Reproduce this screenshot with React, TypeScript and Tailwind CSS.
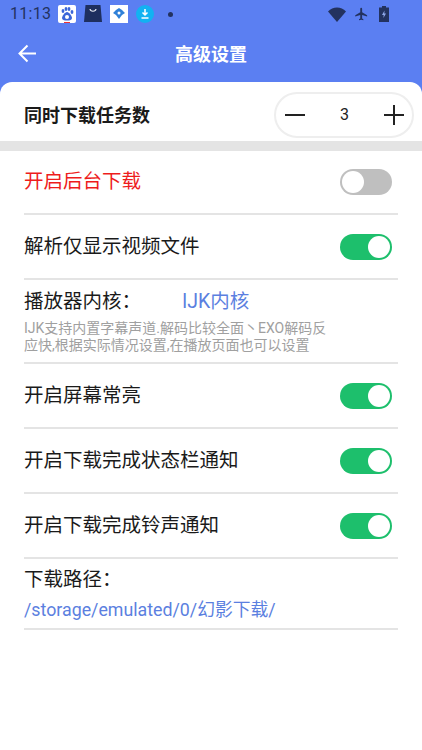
const font = { fontFamily: 'Roboto, "Noto Sans CJK SC", sans-serif' };

function Toggle({ on = true }: { on?: boolean }) {
  return (
    <div className={`w-[52px] h-[26px] rounded-full flex items-center px-[2px] ${on ? "bg-[#1dbf6c] justify-end" : "bg-[#bfbfbf] justify-start"}`}>
      <div className="w-[22px] h-[22px] rounded-full bg-white" />
    </div>
  );
}

function Row({ label, on = true, red = false, h = "h-[64px]" }: { label: string; on?: boolean; red?: boolean; h?: string }) {
  return (
    <div className={`${h} mx-[24px] border-b-2 border-[#e4e4e4] flex items-center justify-between pr-[6px]`}>
      <span className={`text-[19.5px] leading-[26px] ${red ? "text-[#ee1c1c]" : "text-[#1a1a1a]"}`}>{label}</span>
      <Toggle on={on} />
    </div>
  );
}

function StatusBar() {
  return (
    <div className="h-[28px] flex items-center pl-[10px] pr-[33px] text-[#23325f]">
      <span className="text-[16px] leading-[28px] tracking-[0.3px] w-[48px]">11:13</span>
      <div className="flex items-center gap-[8px]">
        <svg width="18" height="18" viewBox="0 0 18 18">
          <rect width="18" height="18" rx="2" fill="#fff" />
          <ellipse cx="5" cy="6" rx="1.4" ry="2" fill="#3b66d8" />
          <ellipse cx="8" cy="4" rx="1.4" ry="2" fill="#3b66d8" />
          <ellipse cx="11" cy="4" rx="1.4" ry="2" fill="#3b66d8" />
          <ellipse cx="14" cy="7" rx="1.4" ry="2" fill="#3b66d8" />
          <path d="M9 7c-2 0-5 4-5 6s2 2.5 5 2.5 5-.5 5-2.5-3-6-5-6z" fill="#3b66d8" />
          <circle cx="9" cy="12" r="2" fill="#fff" />
          <rect x="6" y="17" width="6" height="1" fill="#e33" />
        </svg>
        <svg width="18" height="18" viewBox="0 0 18 18">
          <path d="M1.5 0h15L18 17H0z" fill="#1e2f5f" />
          <path d="M6 4c.5 3 5.500 3 6 0" stroke="#e8ecf5" strokeWidth="1.200" fill="none" />
        </svg>
        <svg width="18" height="18" viewBox="0 0 18 18">
          <rect width="18" height="18" fill="#fff" />
          <path d="M9 3l3 2 3 3-3 2-3 4-3-4-3-2 3-3z" fill="#2f80d8" />
          <circle cx="9" cy="8" r="1.500" fill="#fff" />
        </svg>
        <svg width="18" height="18" viewBox="0 0 18 18">
          <circle cx="9" cy="9" r="9" fill="#12b2f2" />
          <path d="M9 4v6M6.500 7.500L9 10l2.500-2.500M5.500 13h7" stroke="#fff" strokeWidth="1.500" fill="none" />
        </svg>
      </div>
      <div className="ml-[14px] w-[5px] h-[5px] rounded-full bg-[#23325f]" />
      <div className="ml-auto flex items-center gap-[8px]">
        <svg width="18" height="15" viewBox="0 0 18 15">
          <path d="M0 4.500C2.500 1.800 5.600 0.500 9 0.500s6.500 1.300 9 4L9 15z" fill="#23325f" />
        </svg>
        <svg width="15" height="16" viewBox="0 0 24 24" fill="#23325f">
          <path d="M21 16v-2l-8-5V3.500a1.500 1.500 0 0 0-3 0V9l-8 5v2l8-2.500V19l-2 1.500V22l3.500-1 3.500 1v-1.500L13 19v-5.500z" />
        </svg>
        <svg width="10" height="16" viewBox="0 0 10 16" className="ml-[2px]">
          <path d="M3 0h4v1.500h3V16H0V1.500h3z" fill="#23325f" />
          <path d="M5.500 4.500L3 9h1.700l-.3 3L7 7.500H5.300z" fill="#8fa8ea" />
        </svg>
      </div>
    </div>
  );
}

export default function App() {
  return (
    <div className="w-[422px] h-[750px] bg-[#5b7ff2] flex flex-col overflow-hidden" style={font}>
      <StatusBar />
      <div className="h-[54px] relative flex items-center justify-center">
        <svg className="absolute left-[18px] top-[16px]" width="19" height="19" viewBox="0 0 19 19" fill="none" stroke="#fff" strokeWidth="2">
          <path d="M18 9.500H2M9.500 1.500l-8 8 8 8" />
        </svg>
        <span className="text-white text-[18px] font-bold leading-[24px]">高级设置</span>
      </div>
      <div className="flex-1 bg-white rounded-t-[12px] flex flex-col">
        <div className="h-[59px] flex items-center justify-between pl-[24px] pr-[8px] pt-[7px] shrink-0">
          <span className="text-[18px] font-bold text-[#1a1a1a]">同时下载任务数</span>
          <div className="w-[140px] h-[46px] border-2 border-[#eeeeee] rounded-full flex items-center justify-between pl-[9px] pr-[8px]">
            <div className="w-[20px] h-[2px] bg-[#222]" />
            <span className="text-[16px] text-[#222]">3</span>
            <div className="relative w-[20px] h-[20px]">
              <div className="absolute left-0 top-[9px] w-[20px] h-[2px] bg-[#222]" />
              <div className="absolute left-[9px] top-0 w-[2px] h-[20px] bg-[#222]" />
            </div>
          </div>
        </div>
        <div className="h-[10px] bg-[#e4e4e4] shrink-0" />
        <Row label="开启后台下载" on={false} red />
        <Row label="解析仅显示视频文件" h="h-[65px]" />
        <div className="mx-[24px] h-[84px] border-b-2 border-[#e4e4e4] pt-[8px]">
          <div className="flex items-center h-[28px]">
            <span className="text-[19.5px] text-[#1a1a1a] w-[158px]">播放器内核：</span>
            <span className="text-[19.5px] text-[#5b7fe0]">IJK内核</span>
          </div>
          <p className="mt-[4px] text-[14px] leading-[17px] text-[#a0a0a0] w-[310px]">IJK支持内置字幕声道.解码比较全面丶EXO解码反应快,根据实际情况设置,在播放页面也可以设置</p>
        </div>
        <Row label="开启屏幕常亮" h="h-[65px]" />
        <Row label="开启下载完成状态栏通知" h="h-[65px]" />
        <Row label="开启下载完成铃声通知" h="h-[65px]" />
        <div className="mx-[24px] h-[71px] border-b-2 border-[#e4e4e4] pt-[7px]">
          <div className="text-[19.5px] leading-[28px] text-[#1a1a1a]">下载路径：</div>
          <div className="mt-[4px] text-[17.8px] leading-[24px] text-[#5b7fe0]">/storage/emulated/0/幻影下载/</div>
        </div>
      </div>
    </div>
  );
}
